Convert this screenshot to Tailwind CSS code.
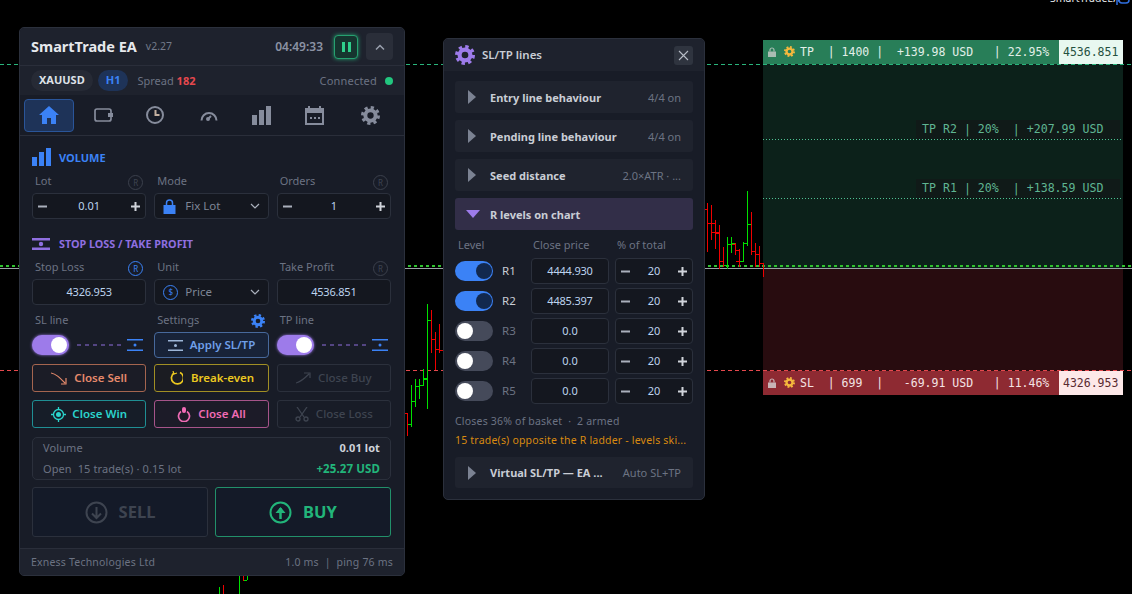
<!DOCTYPE html>
<html lang="en">
  <head>
    <meta charset="UTF-8" />
    <title>SmartTrade EA</title>
    <script src="https://cdn.jsdelivr.net/npm/@tailwindcss/browser@4"></script>
  </head>
  <body class="bg-black">
    <div class="relative w-[1132px] h-[594px] overflow-hidden bg-black font-['Noto_Sans',sans-serif] text-[#8b92a3]">
      <!-- chart zones -->
      <div class="absolute left-[763px] top-[64px] w-[360px] h-[204px] bg-[#0c211a]"></div>
      <div class="absolute left-[763px] top-[268px] w-[360px] h-[103px] bg-[#280c0f]"></div>

      <!-- chart lines and candles -->
      <svg class="absolute left-0 top-0" width="1132" height="594" shape-rendering="crispEdges">
        <line x1="0" x2="1132" y1="64.5" y2="64.5" stroke="#29b57c" stroke-dasharray="4 3" />
        <line x1="763" x2="1122" y1="139.5" y2="139.5" stroke="#4fc193" stroke-dasharray="1 2" />
        <line x1="763" x2="1122" y1="198.5" y2="198.5" stroke="#4fc193" stroke-dasharray="1 2" />
        <line x1="0" x2="1132" y1="266" y2="266" stroke="#2fc22f" stroke-width="2" stroke-dasharray="3 3" />
        <line x1="0" x2="1132" y1="268.5" y2="268.5" stroke="#9aa0a6" />
        <line x1="0" x2="1132" y1="370.5" y2="370.5" stroke="#e5484d" stroke-dasharray="4 3" />
        <g stroke="#f00000">
          <path d="M407.5 413V436M405 413H407M408 424H410" fill="none" />
          <path d="M431.5 310V353M428 320H431M432 339H435" fill="none" />
          <path d="M435.5 332V370M432 339H435M436 349H439" fill="none" />
          <path d="M439.5 324V353M436 349H439M440 350H443" fill="none" />
          <path d="M707.5 203V252M705 209H707" fill="none" />
          <path d="M711.5 205V240M708 223H711M712 223H715" fill="none" />
          <path d="M715.5 220V249M712 232H715M716 232H719" fill="none" />
          <path d="M719.5 225V269M716 233H719M720 261H723" fill="none" />
          <path d="M723.5 247V267M720 261H723M724 265H727" fill="none" />
          <path d="M735.5 243V255M732 244H735M736 250H739" fill="none" />
          <path d="M739.5 249V267M736 261H739M740 261H743" fill="none" />
          <path d="M751.5 212V255M748 224H751M752 251H755" fill="none" />
          <path d="M755.5 243V267M752 251H755M756 254H759" fill="none" />
          <path d="M759.5 246V267M756 254H759M760 263H763" fill="none" />
          <path d="M763.5 263V277" fill="none" />
          <path d="M223.5 585V594M243.5 576V581" fill="none" />
        </g>
        <g stroke="#00e000">
          <path d="M411.5 385V427M408 424H411" fill="none" />
          <path d="M415.5 379V407M412 401H415M416 386H419" fill="none" />
          <path d="M419.5 379V399M416 386H419M420 385H423" fill="none" />
          <path d="M423.5 369V386M420 385H423M424 379H427" fill="none" />
          <path d="M427.5 304V409M424 378H427M428 320H431" fill="none" />
          <path d="M727.5 237V269M724 265H727M728 244H731" fill="none" />
          <path d="M731.5 237V253M728 244H731M732 243H735" fill="none" />
          <path d="M743.5 242V262M740 261H743M744 243H747" fill="none" />
          <path d="M747.5 191V246M744 243H747M748 224H751" fill="none" />
          <path d="M239.5 576V594M219.5 587V594M247.5 576V580M244 580H247" fill="none" />
        </g>
      </svg>

      <!-- chart name, cut at the top edge -->
      <div class="absolute left-[1050px] top-[-9px] text-[10.500px] leading-[14px] text-[#e4e6ea]">SmartTradeEA</div>
      <svg class="absolute left-[1116px] top-[-6px]" width="14" height="14" viewBox="0 0 14 14" fill="none" stroke="#2f6fe0" stroke-width="1.5"><rect x="3" y="1" width="10" height="8" rx="3" /><path d="M1 4V11" /></svg>

      <!-- TP tag -->
      <div class="absolute left-[763px] top-[40px] w-[360px] h-[24px] flex bg-[#287e58] font-['DejaVu_Sans_Mono',monospace] text-[11.5px] leading-[24px] text-[#e2efe8]">
        <svg class="ml-[4px] mt-[7px]" width="10" height="10" viewBox="0 0 10 10" fill="#a9bdb3"><path d="M1 4.5h8v5.500h-8z" /><path d="M3 4.500V3a2 2 0 0 1 4 0v1.500" fill="none" stroke="#a9bdb3" stroke-width="1.200" /></svg>
        <svg class="ml-[7px] mt-[6px]" width="11" height="11" viewBox="0 0 24 24" fill="none" stroke="#f5b83d"><circle cx="12" cy="12" r="6.500" stroke-width="5" /><circle cx="12" cy="12" r="10" stroke-width="4" stroke-dasharray="4 3.850" /></svg>
        <span class="ml-[5px] whitespace-pre">TP  | 1400 |  +139.98 USD   | 22.95%</span>
        <span class="absolute left-[296px] w-[64px] h-[24px] pl-[4px] bg-[#e8f8f0] text-[#25513f]">4536.851</span>
      </div>

      <!-- SL tag -->
      <div class="absolute left-[763px] top-[371px] w-[360px] h-[24px] flex bg-[#8e2a32] font-['DejaVu_Sans_Mono',monospace] text-[11.5px] leading-[24px] text-[#f4e3e4]">
        <svg class="ml-[4px] mt-[7px]" width="10" height="10" viewBox="0 0 10 10" fill="#c9b3b6"><path d="M1 4.5h8v5.500h-8z" /><path d="M3 4.500V3a2 2 0 0 1 4 0v1.500" fill="none" stroke="#c9b3b6" stroke-width="1.200" /></svg>
        <svg class="ml-[7px] mt-[6px]" width="11" height="11" viewBox="0 0 24 24" fill="none" stroke="#f5b83d"><circle cx="12" cy="12" r="6.500" stroke-width="5" /><circle cx="12" cy="12" r="10" stroke-width="4" stroke-dasharray="4 3.850" /></svg>
        <span class="ml-[5px] whitespace-pre">SL  | 699  |   -69.91 USD   | 11.46%</span>
        <span class="absolute left-[296px] w-[64px] h-[24px] pl-[4px] bg-[#fde8e8] text-[#5a2a30]">4326.953</span>
      </div>

      <!-- R labels -->
      <div class="absolute left-[916px] top-[120px] w-[204px] h-[19px] bg-[#101a18] pl-[6px] whitespace-pre font-['DejaVu_Sans_Mono',monospace] text-[11.600px] leading-[19px] text-[#5fb592]">TP R2 | 20%  | +207.99 USD</div>
      <div class="absolute left-[916px] top-[179px] w-[204px] h-[19px] bg-[#101a18] pl-[6px] whitespace-pre font-['DejaVu_Sans_Mono',monospace] text-[11.600px] leading-[19px] text-[#5fb592]">TP R1 | 20%  | +138.59 USD</div>

      <!-- main panel -->
      <div class="absolute left-[19px] top-[27px] w-[386px] h-[549px] flex flex-col rounded-[5px] border border-[#2b303c] bg-[#181c27] overflow-hidden">
        <div class="h-[38px] shrink-0 flex items-center pl-[11px] pr-[11px] bg-[#1e222d] border-b border-[#2a2e3a]">
          <span class="text-[14.500px] font-bold text-[#e6e8ec]">SmartTrade EA</span>
          <span class="ml-[9px] text-[10.500px] text-[#737a8a]">v2.27</span>
          <span class="ml-auto text-[12px] font-semibold text-[#8b92a3]">04:49:33</span>
          <span class="ml-[11px] w-[24px] h-[24px] flex items-center justify-center gap-[3px] rounded-[4px] border border-[#26a170] bg-[#16352f] shadow-[0_0_4px_#26a170]">
            <i class="block w-[3px] h-[10px] bg-[#2fcf8c]"></i><i class="block w-[3px] h-[10px] bg-[#2fcf8c]"></i>
          </span>
          <span class="ml-[8px] w-[27px] h-[27px] flex items-center justify-center rounded-[4px] bg-[#2a2e39]">
            <svg width="12" height="8" viewBox="0 0 12 8" fill="none" stroke="#9aa0ae" stroke-width="1.500"><path d="M2 6.500l4-4 4 4" /></svg>
          </span>
        </div>
        <div class="h-[29px] shrink-0 flex items-center pl-[11px] pr-[11px] bg-[#1e222d]">
          <span class="h-[21px] px-[8px] flex items-center rounded-full bg-[#262a35] text-[11px] font-bold text-[#dfe2e8]">XAUUSD</span>
          <span class="ml-[5px] h-[21px] px-[8px] flex items-center rounded-full bg-[#1e3358] text-[11px] font-bold text-[#3b82f6]">H1</span>
          <span class="ml-[9px] pt-[2px] text-[11px] text-[#6c7383]">Spread <b class="font-bold text-[#e5484d]">182</b></span>
          <span class="ml-auto pt-[2px] text-[11px] tracking-[0.2px] text-[#6c7383]">Connected</span>
          <span class="ml-[8px] w-[8px] h-[8px] rounded-full bg-[#22c67f]"></span>
        </div>
        <div class="h-[41px] shrink-0 flex items-center pl-[4px] pr-[10px] border-b border-[#2a2e3a]">
          <span class="w-[50px] h-[33px] flex items-center justify-center rounded-[4px] border border-[#2a5599] bg-[#1e3358]">
            <svg width="20" height="18" viewBox="0 0 20 18" fill="#3b82f6"><path d="M10 0L0 9h3v9h5v-6h4v6h5V9h3z" /></svg>
          </span>
          <div class="flex-1 grid grid-cols-6 items-center justify-items-center ml-[3px]">
            <svg width="19" height="14" viewBox="0 0 19 14" fill="none" stroke="#868c9c" stroke-width="1.700"><rect x="1" y="1" width="16" height="12" rx="2" /><rect x="14" y="5" width="5" height="4" fill="#868c9c" stroke="none" /></svg>
            <svg class="-ml-[2px]" width="20" height="20" viewBox="0 0 20 20" fill="none"><circle cx="10" cy="10" r="8" stroke="#868c9c" stroke-width="2" /><path d="M9.500 5h2v4h3v2h-5z" fill="#c4b0a0" /></svg>
            <svg width="18" height="11" viewBox="0 0 18 11" fill="none" stroke="#868c9c" stroke-width="2"><path d="M1.500 10.500A7.500 7.500 0 0 1 16.500 10.500" /><path d="M8 9l3-3" /><circle cx="8" cy="9" r="1" /></svg>
            <svg width="20" height="19" viewBox="0 0 20 19" fill="#868c9c"><rect y="9" width="5" height="10" /><rect x="7" y="4" width="5" height="15" /><rect x="14" width="5" height="19" /></svg>
            <svg width="19" height="19" viewBox="0 0 19 19" fill="#868c9c"><path d="M0 2h3V0h2v2h9V0h2v2h3v17H0zM2 7v10h15V7z" /><path d="M5 11h2v2H5zM9 11h2v2H9zM13 11h2v2h-2z" /></svg>
            <svg class="ml-[6px]" width="19" height="19" viewBox="0 0 24 24" fill="none" stroke="#868c9c"><circle cx="12" cy="12" r="6.500" stroke-width="5" /><circle cx="12" cy="12" r="10" stroke-width="4" stroke-dasharray="4 3.850" /></svg>
          </div>
        </div>

        <!-- volume section -->
        <div class="pl-[12px] pr-[13px]">
          <div class="mt-[12px] h-[18px] flex items-center">
            <svg width="19" height="18" viewBox="0 0 19 18" fill="#3b82f6"><rect y="9" width="5" height="9" /><rect x="7" y="4" width="5" height="14" /><rect x="14" width="5" height="18" /></svg>
            <span class="ml-[8px] pt-[2px] text-[11px] font-bold text-[#3b82f6]">VOLUME</span>
          </div>
          <div class="mt-[7px] grid grid-cols-3 gap-x-2 text-[11px] text-[#6c7383]">
            <div class="h-[20px] pl-[3px] flex items-start justify-between">Lot <span class="mr-[3px] mt-[2px] w-[15px] h-[15px] flex items-center justify-center rounded-full border border-[#3b404c] text-[8px] text-[#3f4552]">R</span></div>
            <div class="h-[20px] pl-[3px]">Mode</div>
            <div class="h-[20px] pl-[3px] flex items-start justify-between">Orders <span class="mr-[3px] mt-[2px] w-[15px] h-[15px] flex items-center justify-center rounded-full border border-[#3b404c] text-[8px] text-[#3f4552]">R</span></div>
          </div>
          <div class="grid grid-cols-3 gap-x-2">
            <div class="h-[26px] flex items-center justify-between px-[5px] rounded-[4px] border border-[#2b303c] bg-[#14171f] text-[11px] text-[#bcd3ee]">
              <svg width="9" height="9" viewBox="0 0 9 9" fill="#aab0bc"><rect y="3.500" width="9" height="2" /></svg><span>0.01</span><svg width="9" height="9" viewBox="0 0 9 9" fill="#cfd3da"><rect y="3.500" width="9" height="2" /><rect x="3.500" width="2" height="9" /></svg>
            </div>
            <div class="h-[26px] flex items-center px-[8px] rounded-[4px] border border-[#2b303c] bg-[#14171f] text-[11.500px] text-[#7f8696]">
              <svg width="13" height="15" viewBox="0 0 12 15" fill="#3b82f6"><path d="M0 6h12v9H0z" /><path d="M3 6V4a3 3 0 0 1 6 0v2" fill="none" stroke="#3b82f6" stroke-width="1.500" /></svg>
              <span class="ml-[9px]">Fix Lot</span>
              <svg class="ml-auto" width="10" height="6" viewBox="0 0 10 6" fill="none" stroke="#aab0bc" stroke-width="1.200"><path d="M1 1l4 4 4-4" /></svg>
            </div>
            <div class="h-[26px] flex items-center justify-between px-[5px] rounded-[4px] border border-[#2b303c] bg-[#14171f] text-[11px] text-[#bcd3ee]">
              <svg width="9" height="9" viewBox="0 0 9 9" fill="#aab0bc"><rect y="3.500" width="9" height="2" /></svg><span>1</span><svg width="9" height="9" viewBox="0 0 9 9" fill="#cfd3da"><rect y="3.500" width="9" height="2" /><rect x="3.500" width="2" height="9" /></svg>
            </div>
          </div>

          <!-- SL/TP section -->
          <div class="mt-[17px] h-[16px] flex items-center">
            <svg width="18" height="12" viewBox="0 0 18 12" fill="#8f6fe0"><rect width="18" height="2.500" /><rect y="9.500" width="18" height="2.500" /><circle cx="9" cy="6" r="2.200" /></svg>
            <span class="ml-[9px] pt-[1px] text-[10.800px] font-bold text-[#8f6fe0]">STOP LOSS / TAKE PROFIT</span>
          </div>
          <div class="mt-[7px] grid grid-cols-3 gap-x-2 text-[11px] text-[#6c7383]">
            <div class="h-[20px] pl-[3px] flex items-start justify-between">Stop Loss <span class="mr-[3px] mt-[2px] w-[15px] h-[15px] flex items-center justify-center rounded-full border border-[#3b82f6] text-[8px] text-[#3b82f6]">R</span></div>
            <div class="h-[20px] pl-[3px]">Unit</div>
            <div class="h-[20px] pl-[3px] flex items-start justify-between">Take Profit <span class="mr-[3px] mt-[2px] w-[15px] h-[15px] flex items-center justify-center rounded-full border border-[#3b404c] text-[8px] text-[#3f4552]">R</span></div>
          </div>
          <div class="grid grid-cols-3 gap-x-2">
            <div class="h-[26px] flex items-center justify-center rounded-[4px] border border-[#2b303c] bg-[#14171f] text-[11px] tracking-[-0.2px] text-[#bcd3ee]">4326.953</div>
            <div class="h-[26px] flex items-center px-[8px] rounded-[4px] border border-[#2b303c] bg-[#14171f] text-[11.500px] text-[#7f8696]">
              <span class="w-[15px] h-[15px] flex items-center justify-center rounded-full border-[1.500px] border-[#3b82f6] text-[8px] text-[#3b82f6]">$</span>
              <span class="ml-[7px]">Price</span>
              <svg class="ml-auto" width="10" height="6" viewBox="0 0 10 6" fill="none" stroke="#aab0bc" stroke-width="1.200"><path d="M1 1l4 4 4-4" /></svg>
            </div>
            <div class="h-[26px] flex items-center justify-center rounded-[4px] border border-[#2b303c] bg-[#14171f] text-[11px] tracking-[-0.2px] text-[#bcd3ee]">4536.851</div>
          </div>
          <div class="mt-[7px] grid grid-cols-3 gap-x-2 text-[11px] text-[#6c7383]">
            <div class="h-[20px] pl-[3px]">SL line</div>
            <div class="h-[20px] pl-[3px] flex items-start justify-between">Settings
              <svg class="mr-[4px] mt-[2px]" width="14" height="14" viewBox="0 0 24 24" fill="none" stroke="#3b82f6"><circle cx="12" cy="12" r="6.500" stroke-width="5" /><circle cx="12" cy="12" r="10" stroke-width="4" stroke-dasharray="4 3.850" /></svg>
            </div>
            <div class="h-[20px] pl-[3px]">TP line</div>
          </div>
          <div class="grid grid-cols-3 gap-x-2">
            <div class="h-[26px] flex items-center">
              <span class="w-[37px] h-[20px] flex items-center justify-end pr-[2px] rounded-full bg-[#9d7bea] shadow-[0_0_3px_#9d7bea]"><i class="block w-[16px] h-[16px] rounded-full bg-white"></i></span>
              <svg class="ml-[8px]" width="44" height="2" viewBox="0 0 44 2" stroke="#8f6fe0"><path d="M0 1H44" stroke-dasharray="4 4" /></svg>
              <svg class="ml-[6px]" width="16" height="12" viewBox="0 0 16 12" fill="#3b82f6"><rect width="16" height="1.500" /><rect y="10.500" width="16" height="1.500" /><circle cx="8" cy="6" r="1.500" /></svg>
            </div>
            <div class="h-[26px] flex items-center justify-center rounded-[4px] border border-[#47699c] bg-[#182338] text-[11.500px] font-semibold text-[#6f9fe8]">
              <svg class="mr-[7px]" width="15" height="11" viewBox="0 0 15 11" fill="#9db6d8"><rect width="15" height="1.500" /><rect y="9.500" width="15" height="1.500" /><circle cx="7.500" cy="5.500" r="1.500" /></svg>Apply SL/TP
            </div>
            <div class="h-[26px] flex items-center">
              <span class="w-[37px] h-[20px] flex items-center justify-end pr-[2px] rounded-full bg-[#9d7bea] shadow-[0_0_3px_#9d7bea]"><i class="block w-[16px] h-[16px] rounded-full bg-white"></i></span>
              <svg class="ml-[8px]" width="44" height="2" viewBox="0 0 44 2" stroke="#8f6fe0"><path d="M0 1H44" stroke-dasharray="4 4" /></svg>
              <svg class="ml-[6px]" width="16" height="12" viewBox="0 0 16 12" fill="#3b82f6"><rect width="16" height="1.500" /><rect y="10.500" width="16" height="1.500" /><circle cx="8" cy="6" r="1.500" /></svg>
            </div>
          </div>
          <div class="mt-[6px] grid grid-cols-3 gap-x-2 gap-y-2 text-[11.500px] font-semibold">
            <div class="h-[28px] flex items-center justify-center rounded-[3px] border-[1.500px] border-[#a5654f] bg-[#1b1c26] text-[#e58a6c]">
              <svg class="mr-[7px]" width="16" height="13" viewBox="0 0 16 13" fill="none" stroke="#e58a6c" stroke-width="1.200"><path d="M0 1c5 1 8 4 14 10M15 6v6H10" /></svg>Close Sell
            </div>
            <div class="h-[28px] flex items-center justify-center rounded-[3px] border-[1.500px] border-[#a18f24] bg-[#1b1c22] text-[#ecc920]">
              <svg class="mr-[8px]" width="14" height="14" viewBox="0 0 14 14" fill="none" stroke="#ecc920" stroke-width="1.700"><path d="M5 2a6 6 0 1 0 6-.5" /><path d="M4 0l1 3 3-1" stroke-width="1.200" /></svg>Break-even
            </div>
            <div class="h-[28px] flex items-center justify-center rounded-[3px] border-[1.500px] border-[#2b303c] bg-[#181c27] font-medium text-[#3e4450]">
              <svg class="mr-[7px]" width="15" height="12" viewBox="0 0 15 12" fill="none" stroke="#3e4450" stroke-width="1.200"><path d="M0 11c4-1 8-4 13-9M8 1h6v5" /></svg>Close Buy
            </div>
            <div class="h-[28px] flex items-center justify-center rounded-[3px] border-[1.500px] border-[#1f8f94] bg-[#161d28] text-[#2bd4cc]">
              <svg class="mr-[6px]" width="15" height="15" viewBox="0 0 15 15" fill="none" stroke="#2bd4cc" stroke-width="1.300"><circle cx="7.500" cy="7.500" r="5" /><circle cx="7.500" cy="7.500" r="2.500" fill="#2bd4cc" stroke="none" /><path d="M7.500 0v2.500M7.500 12.500V15M0 7.500h2.500M12.500 7.500H15" /></svg>Close Win
            </div>
            <div class="h-[28px] flex items-center justify-center rounded-[3px] border-[1.500px] border-[#a6548a] bg-[#1c1b28] text-[#f06bb5]">
              <svg class="mr-[7px]" width="14" height="15" viewBox="0 0 14 15" fill="none" stroke="#f06bb5" stroke-width="1.700"><path d="M4 4.500a5.500 5.500 0 1 0 6 0" /><rect x="5" y="0" width="4" height="6" rx="2" fill="#f06bb5" stroke="none" /></svg>Close All
            </div>
            <div class="h-[28px] flex items-center justify-center rounded-[3px] border-[1.500px] border-[#2b303c] bg-[#181c27] font-medium text-[#3e4450]">
              <svg class="mr-[7px]" width="14" height="15" viewBox="0 0 14 15" fill="none" stroke="#3e4450" stroke-width="1.300"><path d="M2 0l7 10M12 0L5 10" /><circle cx="3" cy="12" r="2" /><circle cx="11" cy="12" r="2" /></svg>Close Loss
            </div>
          </div>
          <div class="mt-[9px] h-[43px] px-[10px] pt-[1px] rounded-[5px] border border-[#2b303c] bg-[#1b1f2a] text-[11px] tracking-[0.1px] text-[#6c7383]">
            <div class="h-[19px] flex items-center justify-between">Volume<b class="font-bold text-[#cfd3da]">0.01 lot</b></div>
            <div class="h-[22px] flex items-center justify-between">Open&nbsp; 15 trade(s) · 0.15 lot<b class="text-[11.500px] font-bold text-[#22b57a]">+25.27 USD</b></div>
          </div>
          <div class="mt-[7px] h-[50px] flex gap-[7px]">
            <div class="flex-1 flex items-center justify-center rounded-[3px] border-[1.500px] border-[#2b303c] bg-[#141a28] text-[16.500px] font-bold text-[#3e4450]">
              <svg class="mr-[11px]" width="23" height="23" viewBox="0 0 23 23" fill="none" stroke="#3e4450" stroke-width="2"><circle cx="11.500" cy="11.500" r="10" /><path d="M11.500 6v11M7 12.500l4.500 4.500 4.500-4.500" /></svg>SELL
            </div>
            <div class="flex-1 flex items-center justify-center rounded-[3px] border-[1.500px] border-[#22906a] bg-[#141a28] text-[16.500px] font-bold text-[#22b57a]">
              <svg class="mr-[11px]" width="23" height="23" viewBox="0 0 23 23" fill="none" stroke="#22b57a" stroke-width="2"><circle cx="11.500" cy="11.500" r="10" /><path d="M11.500 18V7" stroke-width="2.500" /><path d="M6.500 12l5-6 5 6z" fill="#22b57a" stroke="none" /></svg>BUY
            </div>
          </div>
        </div>
        <div class="mt-auto h-[27px] flex items-center justify-between px-[11px] pt-[2px] border-t border-[#2a2e3a] bg-[#1e222d] text-[10.500px] tracking-[0.2px] text-[#6c7383]">
          <span>Exness Technologies Ltd</span><span>1.0 ms&nbsp; | &nbsp;ping 76 ms</span>
        </div>
      </div>

      <!-- SL/TP lines panel -->
      <div class="absolute left-[443px] top-[38px] w-[262px] h-[462px] flex flex-col rounded-[5px] border border-[#2b303c] bg-[#181c27] overflow-hidden">
        <div class="h-[32px] shrink-0 flex items-center pl-[11px] pr-[11px] bg-[#1e222d]">
          <svg width="20" height="20" viewBox="0 0 24 24" fill="none" stroke="#9d7bea"><circle cx="12" cy="12" r="6.500" stroke-width="5" /><circle cx="12" cy="12" r="10" stroke-width="4" stroke-dasharray="4 3.850" /></svg>
          <span class="ml-[7px] text-[11.500px] font-semibold text-[#c9cdd5]">SL/TP lines</span>
          <span class="ml-auto w-[19px] h-[19px] flex items-center justify-center rounded-[3px] bg-[#2f343f]">
            <svg width="11" height="11" viewBox="0 0 11 11" stroke="#b6bbc5" stroke-width="1.100"><path d="M1 1l9 9M10 1l-9 9" /></svg>
          </span>
        </div>
        <div class="px-[11px] pt-[10px] flex flex-col gap-[7px]">
          <div class="h-[32px] flex items-center pl-[13px] pr-[12px] pt-[2px] rounded-[3px] bg-[#1f232e]">
            <i class="block -mt-[2px] w-0 h-0 border-y-[7px] border-y-transparent border-l-[8px] border-l-[#7b8292]"></i>
            <span class="ml-[14px] text-[11px] font-bold text-[#c9cdd5]">Entry line behaviour</span>
            <span class="ml-auto text-[11px] text-[#6c7383]">4/4 on</span>
          </div>
          <div class="h-[32px] flex items-center pl-[13px] pr-[12px] pt-[2px] rounded-[3px] bg-[#1f232e]">
            <i class="block -mt-[2px] w-0 h-0 border-y-[7px] border-y-transparent border-l-[8px] border-l-[#7b8292]"></i>
            <span class="ml-[14px] text-[11px] font-bold text-[#c9cdd5]">Pending line behaviour</span>
            <span class="ml-auto text-[11px] text-[#6c7383]">4/4 on</span>
          </div>
          <div class="h-[32px] flex items-center pl-[13px] pr-[12px] pt-[2px] rounded-[3px] bg-[#1f232e]">
            <i class="block -mt-[2px] w-0 h-0 border-y-[7px] border-y-transparent border-l-[8px] border-l-[#7b8292]"></i>
            <span class="ml-[14px] text-[11px] font-bold text-[#c9cdd5]">Seed distance</span>
            <span class="ml-auto text-[11px] text-[#6c7383]">2.0×ATR · ...</span>
          </div>
          <div class="h-[32px] flex items-center pl-[11px] pr-[13px] pt-[2px] rounded-[3px] bg-[#322e48]">
            <i class="block -mt-[2px] w-0 h-0 border-x-[7px] border-x-transparent border-t-[8px] border-t-[#9d7bea]"></i>
            <span class="ml-[10px] text-[11px] font-bold text-[#c9cdd5]">R levels on chart</span>
          </div>
        </div>
        <div class="px-[11px]">
          <div class="mt-[7px] h-[16px] grid grid-cols-[76px_84px_78px] text-[11px] leading-[16px] text-[#6c7383]">
            <span class="pl-[3px]">Level</span><span class="pl-[2px]">Close price</span><span class="pl-[2px]">% of total</span>
          </div>
          <div class="mt-[5px] flex flex-col gap-[4px]">
            <div class="h-[26px] flex items-center">
              <span class="w-[38px] h-[20px] flex items-center justify-end pr-[1px] rounded-full bg-[#3b82f6]"><i class="block w-[16px] h-[16px] rounded-full bg-[#12284e]"></i></span>
              <span class="w-[38px] pl-[9px] text-[11.500px] text-[#c9cdd5]">R1</span>
              <span class="w-[78px] h-[26px] flex items-center justify-center rounded-[4px] border border-[#2b303c] bg-[#14171f] text-[11px] tracking-[-0.2px] text-[#bcd3ee]">4444.930</span>
              <span class="ml-[6px] w-[78px] h-[26px] flex items-center justify-between px-[5px] rounded-[4px] border border-[#2b303c] bg-[#14171f] text-[11px] text-[#bcd3ee]"><svg width="9" height="9" viewBox="0 0 9 9" fill="#aab0bc"><rect y="3.500" width="9" height="2" /></svg>20<svg width="9" height="9" viewBox="0 0 9 9" fill="#cfd3da"><rect y="3.500" width="9" height="2" /><rect x="3.500" width="2" height="9" /></svg></span>
            </div>
            <div class="h-[26px] flex items-center">
              <span class="w-[38px] h-[20px] flex items-center justify-end pr-[1px] rounded-full bg-[#3b82f6]"><i class="block w-[16px] h-[16px] rounded-full bg-[#12284e]"></i></span>
              <span class="w-[38px] pl-[9px] text-[11.500px] text-[#c9cdd5]">R2</span>
              <span class="w-[78px] h-[26px] flex items-center justify-center rounded-[4px] border border-[#2b303c] bg-[#14171f] text-[11px] tracking-[-0.2px] text-[#bcd3ee]">4485.397</span>
              <span class="ml-[6px] w-[78px] h-[26px] flex items-center justify-between px-[5px] rounded-[4px] border border-[#2b303c] bg-[#14171f] text-[11px] text-[#bcd3ee]"><svg width="9" height="9" viewBox="0 0 9 9" fill="#aab0bc"><rect y="3.500" width="9" height="2" /></svg>20<svg width="9" height="9" viewBox="0 0 9 9" fill="#cfd3da"><rect y="3.500" width="9" height="2" /><rect x="3.500" width="2" height="9" /></svg></span>
            </div>
            <div class="h-[26px] flex items-center">
              <span class="w-[38px] h-[20px] flex items-center pl-[2px] rounded-full bg-[#454a5a]"><i class="block w-[16px] h-[16px] rounded-full bg-white"></i></span>
              <span class="w-[38px] pl-[9px] text-[11.500px] text-[#6c7383]">R3</span>
              <span class="w-[78px] h-[26px] flex items-center justify-center rounded-[4px] border border-[#2b303c] bg-[#14171f] text-[11px] text-[#bcd3ee]">0.0</span>
              <span class="ml-[6px] w-[78px] h-[26px] flex items-center justify-between px-[5px] rounded-[4px] border border-[#2b303c] bg-[#14171f] text-[11px] text-[#bcd3ee]"><svg width="9" height="9" viewBox="0 0 9 9" fill="#aab0bc"><rect y="3.500" width="9" height="2" /></svg>20<svg width="9" height="9" viewBox="0 0 9 9" fill="#cfd3da"><rect y="3.500" width="9" height="2" /><rect x="3.500" width="2" height="9" /></svg></span>
            </div>
            <div class="h-[26px] flex items-center">
              <span class="w-[38px] h-[20px] flex items-center pl-[2px] rounded-full bg-[#454a5a]"><i class="block w-[16px] h-[16px] rounded-full bg-white"></i></span>
              <span class="w-[38px] pl-[9px] text-[11.500px] text-[#6c7383]">R4</span>
              <span class="w-[78px] h-[26px] flex items-center justify-center rounded-[4px] border border-[#2b303c] bg-[#14171f] text-[11px] text-[#bcd3ee]">0.0</span>
              <span class="ml-[6px] w-[78px] h-[26px] flex items-center justify-between px-[5px] rounded-[4px] border border-[#2b303c] bg-[#14171f] text-[11px] text-[#bcd3ee]"><svg width="9" height="9" viewBox="0 0 9 9" fill="#aab0bc"><rect y="3.500" width="9" height="2" /></svg>20<svg width="9" height="9" viewBox="0 0 9 9" fill="#cfd3da"><rect y="3.500" width="9" height="2" /><rect x="3.500" width="2" height="9" /></svg></span>
            </div>
            <div class="h-[26px] flex items-center">
              <span class="w-[38px] h-[20px] flex items-center pl-[2px] rounded-full bg-[#454a5a]"><i class="block w-[16px] h-[16px] rounded-full bg-white"></i></span>
              <span class="w-[38px] pl-[9px] text-[11.500px] text-[#6c7383]">R5</span>
              <span class="w-[78px] h-[26px] flex items-center justify-center rounded-[4px] border border-[#2b303c] bg-[#14171f] text-[11px] text-[#bcd3ee]">0.0</span>
              <span class="ml-[6px] w-[78px] h-[26px] flex items-center justify-between px-[5px] rounded-[4px] border border-[#2b303c] bg-[#14171f] text-[11px] text-[#bcd3ee]"><svg width="9" height="9" viewBox="0 0 9 9" fill="#aab0bc"><rect y="3.500" width="9" height="2" /></svg>20<svg width="9" height="9" viewBox="0 0 9 9" fill="#cfd3da"><rect y="3.500" width="9" height="2" /><rect x="3.500" width="2" height="9" /></svg></span>
            </div>
          </div>
          <div class="mt-[10px] text-[10.500px] leading-[15px] tracking-[0.2px] text-[#6c7383]">Closes 36% of basket &nbsp;·&nbsp; 2 armed</div>
          <div class="mt-[4px] text-[10.500px] leading-[15px] tracking-[0.2px] text-[#d98a10]">15 trade(s) opposite the R ladder - levels ski...</div>
          <div class="mt-[9px] h-[31px] flex items-center pl-[13px] pr-[12px] pt-[1px] rounded-[3px] bg-[#1f232e]">
            <i class="block -mt-[1px] w-0 h-0 border-y-[7px] border-y-transparent border-l-[8px] border-l-[#7b8292]"></i>
            <span class="ml-[14px] text-[11px] font-bold text-[#c9cdd5]">Virtual SL/TP — EA ...</span>
            <span class="ml-auto text-[11px] text-[#6c7383]">Auto SL+TP</span>
          </div>
        </div>
      </div>
    </div>
  </body>
</html>
